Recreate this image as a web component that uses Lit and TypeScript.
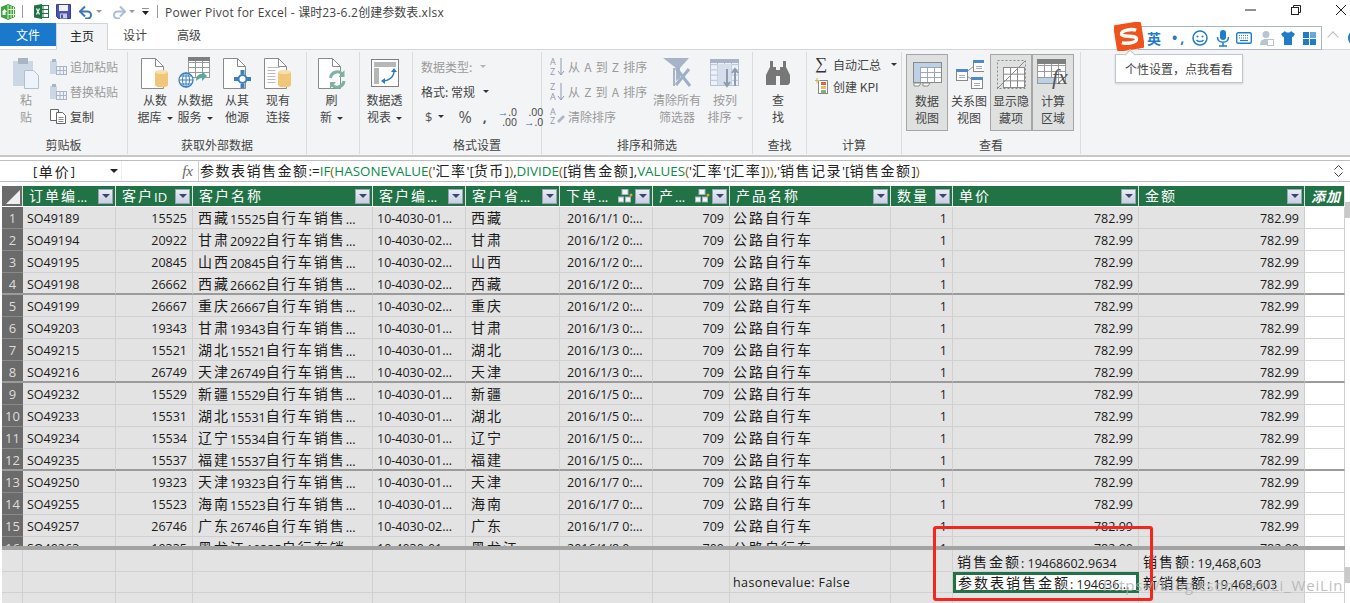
import { LitElement, html, css, svg, unsafeCSS } from "lit";
import { customElement } from "lit/decorators.js";

const cjk = (s: string) =>
  s.split(/([\u3000-\u9fff\uff00-\uffef]+)/).map((p, i) => (i % 2 ? html`<span class="c">${p}</span>` : p));

const COLS = "21px 93px 77px 180px 93px 94px 93px 77px 161px 62px 186px 166px 40px";

const rows: [string, string, string, string, string][] = [
  ["SO49189", "15525", "西藏", "01", "1/1"],
  ["SO49194", "20922", "甘肃", "02", "1/2"],
  ["SO49195", "20845", "山西", "02", "1/2"],
  ["SO49198", "26662", "西藏", "02", "1/2"],
  ["SO49199", "26667", "重庆", "02", "1/2"],
  ["SO49203", "19343", "甘肃", "01", "1/3"],
  ["SO49215", "15521", "湖北", "01", "1/3"],
  ["SO49216", "26749", "天津", "02", "1/3"],
  ["SO49232", "15529", "新疆", "01", "1/5"],
  ["SO49233", "15531", "湖北", "01", "1/5"],
  ["SO49234", "15534", "辽宁", "01", "1/5"],
  ["SO49235", "15537", "福建", "01", "1/5"],
  ["SO49250", "19323", "天津", "01", "1/7"],
  ["SO49255", "15523", "海南", "01", "1/7"],
  ["SO49257", "26746", "广东", "02", "1/7"],
  ["SO49263", "19335", "黑龙江", "01", "1/8"],
];

const heads = ["订单编...", "客户ID", "客户名称", "客户编...", "客户省...", "下单...", "产...", "产品名称", "数量", "单价", "金额"];

const I = (w: number, h: number, body: unknown) =>
  html`<svg width=${w} height=${h} viewBox="0 0 ${w} ${h}" xmlns="http://www.w3.org/2000/svg">${body}</svg>`;

const page = (x = 0.5, y = 0.5, w = 22, h = 30) =>
  svg`<path d="M${x} ${y}h${w - 8}l8 8v${h - 8}h-${w}z" fill="#fff" stroke="#8a8a8a"/><path d="M${x + w - 8} ${y}v8h8" fill="none" stroke="#8a8a8a"/>`;
const cyl = (x: number, y: number, w = 13, h = 17) =>
  svg`<path d="M${x} ${y + 2}v${h - 4}c0 3 ${w} 3 ${w} 0v-${h - 4}z" fill="#efc67a"/><ellipse cx=${x + w / 2} cy=${y + 2} rx=${w / 2} ry="2" fill="#f7dfae"/>`;
const grid = (x: number, y: number, w: number, h: number, c: number, r: number, col = "#9a9a9a", fill = "#fff") => {
  const cw = w / c, rh = h / r;
  const l = [];
  for (let i = 1; i < c; i++) l.push(svg`<path d="M${x + i * cw} ${y}v${h}" stroke=${col} fill="none"/>`);
  for (let i = 1; i < r; i++) l.push(svg`<path d="M${x} ${y + i * rh}h${w}" stroke=${col} fill="none"/>`);
  return svg`<rect x=${x} y=${y} width=${w} height=${h} fill=${fill} stroke=${col}/>${l}`;
};

const ic = {
  app: I(16, 16, svg`<path d="M8 0l7 3v10l-7 3-7-3V3z" fill="#3fa33f"/><path d="M8 1v14M11 2v12M13.500 3v10M8 5.500h7M8 10.500h7" stroke="#dff2cf" fill="none"/><path d="M2 8l2.500-3L7 8H5.500v3h-3V8z" fill="#fff"/>`),
  xl: I(15, 15, svg`<rect x="6" y="1.500" width="8.500" height="12" fill="#fff" stroke="#1f7244"/><path d="M9 2v11M6 5.500h8M6 9.500h8" stroke="#1f7244"/><path d="M0 1.500l8-1.500v15l-8-1.500z" fill="#1f7244"/><path d="M2.500 4.500l3 6M5.500 4.500l-3 6" stroke="#fff" stroke-width="1.200"/>`),
  save: I(15, 15, svg`<path d="M0.500 0.500h14v14h-12l-2-2z" fill="#4f55a8" stroke="#3c3f8c"/><rect x="3" y="1" width="9" height="6" fill="#eef0fa"/><rect x="4" y="9.500" width="7" height="5" fill="#c7cbe3"/><rect x="5" y="10.500" width="2" height="3.500" fill="#4f55a8"/>`),
  undo: I(14, 14, svg`<path d="M2 6.500h6.500a3.500 3.500 0 0 1 0 7H6" fill="none" stroke="#3b78b5" stroke-width="2"/><path d="M6 1.500L1 6.500l5 5" fill="none" stroke="#3b78b5" stroke-width="2"/>`),
  redo: I(14, 14, svg`<path d="M12 6.500H5.500a3.500 3.500 0 0 0 0 7H8" fill="none" stroke="#a9bed4" stroke-width="2"/><path d="M8 1.500l5 5-5 5" fill="none" stroke="#a9bed4" stroke-width="2"/>`),
  paste: I(27, 31, svg`<rect x="0" y="3" width="20" height="25" fill="#ccd7e6"/><rect x="5" y="0" width="10" height="6" fill="#a9b4c2"/><path d="M11.500 12.500h9l5 5v13h-14z" fill="#eef3fb" stroke="#b3bfd0"/>`),
  psm: I(17, 16, svg`<rect x="0" y="2" width="7" height="13" fill="#ccd7e6"/><rect x="2" y="0" width="4" height="3" fill="#a9b4c2"/><rect x="6.500" y="7.500" width="10" height="8" fill="#eef3fb" stroke="#aab4c2"/><path d="M6.500 11.500h10M10 8v7M13.500 8v7" stroke="#aab4c2"/>`),
  copy: I(17, 15, svg`<path d="M0.500 0.500h8v11h-8z" fill="#fff" stroke="#666"/><path d="M6.500 3.500h6l3 3v8h-9z" fill="#fff" stroke="#666"/><path d="M8.500 8.500h5M8.500 10.500h5M8.500 12.500h5" stroke="#888"/>`),
  dbdoc: I(28, 31, svg`${page()}${cyl(14, 12)}`),
  svc: I(34, 32, svg`${grid(10.5, 0.5, 21, 20, 3, 4)}<rect x="10" y="0" width="22" height="4" fill="#7f7f7f"/><circle cx="8" cy="23" r="7" fill="#fff" stroke="#3a7fbf" stroke-width="1.300"/><path d="M1 23h14M8 16v14M3 19h10M3 27h10" stroke="#3a7fbf"/><ellipse cx="8" cy="23" rx="3.500" ry="7" fill="none" stroke="#3a7fbf"/><path d="M18 24c0-5 2-7 6-7v-3l5 5-5 5v-3c-2 0-4 1-6 3z" fill="#5fa79a"/>`),
  other: I(28, 31, svg`${page()}<circle cx="19.500" cy="21" r="4" fill="#fff" stroke="#3a7fbf" stroke-width="2"/><rect x="17.500" y="12" width="4" height="4" fill="#3a7fbf"/><rect x="17.500" y="26" width="4" height="4" fill="#3a7fbf"/><rect x="11" y="19" width="4" height="4" fill="#3a7fbf"/><rect x="24" y="19" width="4" height="4" fill="#3a7fbf"/>`),
  exist: I(28, 31, svg`${page()}<path d="M3.500 9.500h12M3.500 12.500h8M3.500 15.500h8M3.500 18.500h8M3.500 21.500h8M3.500 24.500h8" stroke="#b9b9b9"/>${cyl(14, 12)}`),
  refresh: I(28, 31, svg`${page()}<path d="M12.500 20a7 7 0 0 1 12-4" fill="none" stroke="#7db39f" stroke-width="3"/><path d="M26.500 12v7h-6z" fill="#7db39f"/><path d="M26 23a7 7 0 0 1-12 4" fill="none" stroke="#7db39f" stroke-width="3"/><path d="M12 31v-7h6z" fill="#7db39f"/>`),
  pivot: I(28, 28, svg`<rect x="0.500" y="0.500" width="27" height="27" fill="#fff" stroke="#808080"/><rect x="3" y="3" width="22" height="5" fill="#b7b7b7"/><rect x="3" y="9" width="5" height="16" fill="#b7b7b7"/><path d="M11 22c7 0 12-4 12-10" fill="none" stroke="#2e7cc0" stroke-width="1.500"/><path d="M20 13l3-4 3 4zM14 19l-4 3 4 3z" fill="#2e7cc0"/>`),
  azS: I(15, 19, svg`<text x="0" y="8" class="sv">A</text><text x="0" y="18" class="sv">Z</text><path d="M11 1v16M8 14l3 4 3-4" fill="none" stroke="#8f9aae"/>`),
  zaS: I(15, 19, svg`<text x="0" y="8" class="sv">Z</text><text x="0" y="18" class="sv">A</text><path d="M11 1v16M8 14l3 4 3-4" fill="none" stroke="#8f9aae"/>`),
  clrS: I(15, 17, svg`<text x="0" y="7" class="sv">A</text><text x="0" y="16" class="sv">Z</text><path d="M7 13l6-6 2 2-6 6z" fill="#aeb7c6"/>`),
  funnel: I(31, 30, svg`<path d="M1 0h26l-9 10v10l-4 3V10z" fill="#a8b3c8"/><path d="M14 10l14 18M27 11L14 27" stroke="#9db0c6" stroke-width="3" fill="none"/><path d="M12 10v18" stroke="#a8b3c8" stroke-width="2"/>`),
  colsort: I(31, 29, svg`${grid(0.5, 0.5, 28, 26, 4, 5, "#b6c2d2", "#eef2f8")}<rect x="0" y="0" width="29" height="4" fill="#a8b3c8"/><rect x="7.500" y="5" width="14" height="21" fill="#d6deeb"/><path d="M17 10v17M14 23l3 4 3-4M25 27V10M22 14l3-4 3 4" fill="none" stroke="#8c9bb0" stroke-width="2"/>`),
  bino: I(26, 25, svg`<path d="M3 24h8V6H8V0H5v6L1 14v10zM15 24h8l2-2V14l-4-8V0h-3v6h-3z" fill="#777"/><rect x="11" y="9" width="4" height="6" fill="#777"/>`),
  kpi: I(13, 16, svg`<rect x="3.500" y="2.500" width="9" height="13" fill="#fff" stroke="#888"/><rect x="6" y="4" width="5" height="3" fill="#d9654a"/><rect x="6" y="8" width="5" height="3" fill="#e9bd55"/><rect x="6" y="12" width="5" height="3" fill="#7db387"/><path d="M2 0v5M0 2.500h5" stroke="#e4b23f"/>`),
  dataV: I(29, 25, svg`${grid(0.5, 0.5, 28, 20, 4, 4, "#9aa8b8")}<rect x="0" y="0" width="29" height="5" fill="#bcd0e6"/><rect x="0" y="5" width="7" height="15" fill="#bcd0e6"/><path d="M1 21h7l-2 3H1zM10 21h7l-2 3h-5z" fill="#fff" stroke="#8a8a8a"/><rect x="0.500" y="0.500" width="28" height="20" fill="none" stroke="#8a8a8a"/>`),
  rel: I(29, 31, svg`<path d="M9 15L19 7M9 15l10 7" stroke="#999" fill="none"/>${[[1, 10], [18, 1], [16, 18]].map(([x, y]) => svg`<rect x=${x + 0.5} y=${y + 0.5} width="11" height="11" fill="#fff" stroke="#888"/><rect x=${x} y=${y} width="12" height="3" fill="#4f88c6"/><path d="M${x + 3} ${y + 6.500}h6M${x + 3} ${y + 8.500}h6" stroke="#aaa"/>`)}`),
  hide: I(29, 29, svg`<rect x="0.500" y="0.500" width="28" height="28" fill="none" stroke="#8a8a8a" stroke-dasharray="2 2"/>${grid(6.5, 7.500, 21, 20, 3, 3, "#8a8a8a")}<path d="M0 29L28 1" stroke="#8a8a8a"/>`),
  calc: I(32, 31, svg`${grid(0.5, 0.5, 28, 24, 4, 4, "#9a9a9a")}<rect x="0" y="0" width="29" height="5" fill="#7f7f7f"/><rect x="1" y="19" width="19" height="5" fill="#bcd0e6"/><text x="15" y="25" class="fx">fx</text>`),
  logo: I(30, 29, svg`<g transform="rotate(-9 15 14.500)"><rect x="1" y="1" width="28" height="27" rx="3" fill="#f0521c"/><path d="M23 9.500c-4-2.500-15-2.500-15 1.500 0 4 14 2.500 14 7 0 4-11 3.500-15 1.500" fill="none" stroke="#fff" stroke-width="3.400"/></g>`),
  smile: I(16, 16, svg`<circle cx="8" cy="8" r="7" fill="none" stroke="#1e7cc9" stroke-width="1.500"/><circle cx="5.500" cy="6.500" r="1" fill="#1e7cc9"/><circle cx="10.500" cy="6.500" r="1" fill="#1e7cc9"/><path d="M4.500 10c1.500 2 5.500 2 7 0" fill="none" stroke="#1e7cc9" stroke-width="1.300"/>`),
  mic: I(14, 17, svg`<rect x="4" y="0" width="6" height="10" rx="3" fill="#1e7cc9"/><path d="M1.500 7c0 7 11 7 11 0M7 12v4M3 16h8" fill="none" stroke="#1e7cc9" stroke-width="1.500"/>`),
  kb: I(16, 12, svg`<rect x="0.700" y="0.700" width="14.600" height="10.600" rx="1.500" fill="#fff" stroke="#1e7cc9" stroke-width="1.400"/><path d="M3 3.500h10M3 6h10" stroke="#1e7cc9" stroke-dasharray="1 1"/><path d="M4 8.500h8" stroke="#1e7cc9" stroke-width="1.200"/>`),
  user: I(14, 15, svg`<circle cx="6" cy="3.500" r="3.500" fill="#b9c4d2"/><path d="M0 14c0-4 2-6 6-6s5 1 6 2v4z" fill="#b9c4d2"/><rect x="7.500" y="8.500" width="6" height="6" fill="#fff" stroke="#b9c4d2"/>`),
  shirt: I(14, 14, svg`<path d="M4 0L0 3l2 3 1-.5V14h8V5.500l1 .5 2-3-4-3c-1 2-5 2-6 0z" fill="#1e7cc9"/>`),
  tiles: I(13, 13, svg`<rect width="6" height="6" fill="#1e7cc9"/><rect x="7" width="6" height="6" fill="#6aa8dc"/><rect y="7" width="6" height="6" fill="#1e7cc9"/><rect x="7" y="7" width="6" height="6" fill="#1e7cc9"/>`),
  hier: I(15, 14, svg`<rect x="4" y="0.500" width="6" height="5" fill="#f2f4f8" stroke="#aab2bf"/><rect x="0.500" y="8" width="5" height="5" fill="#f2f4f8" stroke="#aab2bf"/><rect x="7.500" y="8" width="5" height="5" fill="#f2f4f8" stroke="#aab2bf"/><circle cx="13" cy="6" r="1.500" fill="#d9a441"/>`),
  min: I(11, 2, svg`<path d="M0 1h11" stroke="#222"/>`),
  max: I(10, 10, svg`<rect x="0.500" y="2.500" width="7" height="7" fill="#fff" stroke="#222"/><path d="M2.500 2V0.500h7v7H8" fill="none" stroke="#222"/>`),
  close: I(10, 10, svg`<path d="M0 0l10 10M10 0L0 10" stroke="#222"/>`),
  custom: I(7, 7, svg`<path d="M0 0h7" stroke="#222"/><path d="M0 3h7L3.500 7z" fill="#222"/>`),
  up: I(9, 5, svg`<path d="M0.500 4.500l4-4 4 4" fill="none" stroke="#444"/>`),
  down: I(9, 5, svg`<path d="M0.500 0.500l4 4 4-4" fill="none" stroke="#444"/>`),
};

@customElement("app-root")
export class AppRoot extends LitElement {
  static styles = css`
    :host { display: block; width: 1350px; height: 603px; overflow: hidden; position: relative; background: #fff;
      font-family: "Open Sans", "Noto Sans CJK SC", sans-serif; font-size: 12px; color: #333; }
    * { box-sizing: border-box; }
    .sv { font: 9px "Open Sans", sans-serif; fill: #8f9aae; }
    .fx { font: italic 22px "Liberation Serif", serif; fill: #555; }

    .title { height: 23px; display: flex; align-items: center; }
    .qa { display: flex; align-items: center; width: 165px; height: 23px; flex: none; }
    .qa > span { display: flex; flex: none; }
    .m6 { margin-right: 6px; } .m11 { margin-right: 11px; } .m7 { margin-right: 7px; } .m8 { margin-right: 8px; }
    .m3 { margin-right: 3px; } .m10 { margin-right: 10px; }
    .qa .sepbar { width: 1px; height: 13px; background: #9a9a9a; }
    .cap { font-size: 12px; letter-spacing: .25px; color: #444; white-space: nowrap; }
    .cap .c { font-family: "Noto Sans CJK SC", sans-serif; font-size: 12px; letter-spacing: 0; }
    .win { margin-left: auto; margin-right: 4px; margin-bottom: 3px; display: flex; align-items: center; gap: 35px; height: 20px; }
    .win span { display: flex; }
    .qa .tri-s { width: 0; height: 0; border-left: 3px solid transparent; border-right: 3px solid transparent; border-top: 3px solid #999; }
    .tri-k { display: inline-block; width: 0; height: 0; border-left: 3px solid transparent; border-right: 3px solid transparent; border-top: 3px solid #333; vertical-align: middle; margin-left: 5px; }
    .tri-g { border-top-color: #b5b5b5; }

    .tabs { height: 27px; display: flex; border-bottom: 1px solid #d5d5d5; font-family: "Noto Sans CJK SC", sans-serif; color: #444; }
    .tab { height: 23px; line-height: 23px; text-align: center; flex: none; }
    .tab.file { width: 56px; background: #1a79ca; color: #fff; }
    .tab.on { width: 52px; height: 27px; border: 1px solid #d5d5d5; border-bottom: 0; background: #f3f4f6; color: #222; }
    .tab.p { width: 54px; }

    .ribbon { height: 107px; background: #f3f4f6; display: flex; font-family: "Noto Sans CJK SC", sans-serif; color: #444; border-bottom: 2px solid #c8c8c8; }
    .grp { display: flex; flex-direction: column; flex: none; margin: 2px 0 1px; border-right: 1px solid #dcdcdc; }
    .g1 { width: 128px; } .g2 { width: 179px; } .g3 { width: 53px; } .g5 { width: 129px; } .g6 { width: 211px; }
    .g7 { width: 54px; } .g8 { width: 95px; } .g9 { width: 179px; }
    .body { flex: 1; display: flex; min-height: 0; }
    .ctr { justify-content: center; padding-right: 3px; }
    .pl6 { padding-left: 6px; } .pl8 { padding-left: 8px; }
    .lab { height: 17px; line-height: 17px; text-align: center; color: #444; margin-bottom: 1px; }
    .lg { display: flex; flex-direction: column; align-items: center; flex: none; text-align: center; line-height: 17px; }
    .lg .i { height: 39px; display: flex; align-items: center; justify-content: center; flex: none; padding-top: 3px; }
    .w28 { width: 28px; margin-left: 12px; }
    .w36 { width: 36px; } .w38 { width: 38px; } .w40 { width: 40px; } .w42 { width: 42px; } .w44 { width: 44px; } .w46 { width: 46px; } .w50 { width: 50px; } .w52 { width: 52px; }
    .dis { color: #9a9a9a; }
    .smc { display: flex; flex-direction: column; flex: none; margin-top: 2px; }
    .smc.paste { margin-left: 10px; }
    .smc.sort { width: 101px; word-spacing: 1.500px; }
    .smc.calc { margin-top: 1px; }
    .sm { height: 25px; display: flex; align-items: center; gap: 3px; white-space: nowrap; }
    .sm svg { flex: none; }
    .smc.calc .sm { height: 22px; gap: 5px; }
    .sigma { font: 17px "Liberation Serif", serif; width: 13px; color: #333; }
    .num { gap: 0; padding-left: 4px; color: #555; }
    .num .d1 { font: 13px "Open Sans", sans-serif; }
    .num .tri-k { margin: 0 14px 0 6px; }
    .num .pc { font: 16px "Open Sans", sans-serif; margin-right: 11px; }
    .num .cm { font: bold 14px "Open Sans", sans-serif; margin-right: 11px; }
    .num .dec { font: 10.500px/10px "Open Sans", sans-serif; text-align: right; color: #444; margin-right: 7px; }
    .num .dec b { color: #2e6da8; }
    .view { padding: 2px 0 0 4px; gap: 0; }
    .view .lg { width: 42px; height: 77px; border: 1px solid transparent; }
    .view .lg.sel { background: #dfe1e1; border-color: #a6a6a6; }
    .view .lg .i { height: 37px; padding-top: 2px; }

    .fbar { margin-top: 3px; height: 22px; display: flex; background: #fff; border-top: 1px solid #bdbdbd; border-bottom: 1px solid #bdbdbd; align-items: center; }
    .name { width: 122px; padding-left: 33px; display: flex; align-items: center; font-size: 13px; letter-spacing: 1.500px; flex: none; height: 100%; border-right: 1px solid #eee; color: #222; }
    .name .c { font-family: "Noto Sans CJK SC", sans-serif; font-size: 14px; letter-spacing: 2px; }
    .name b { margin-left: auto; margin-right: 3px; width: 0; height: 0; border-left: 4px solid transparent; border-right: 4px solid transparent; border-top: 4px solid #222; }
    .fxb { width: 77px; text-align: right; padding-right: 5px; font: italic 15px "Liberation Serif", serif; color: #666; flex: none; height: 100%; border-right: 1px solid #ccc; line-height: 20px; }
    .ftext { flex: 1; padding: 0 0 2px 1px; font-size: 13.400px; white-space: nowrap; color: #222; overflow: hidden; }
    .ftext .c { font-family: "Noto Sans CJK SC", sans-serif; font-size: 14px; letter-spacing: 1.500px; }
    .ftext i { font-style: normal; color: #0b8a4a; }
    .ftext em { font-style: normal; color: #8a5a00; }
    .updn { width: 18px; flex: none; display: flex; flex-direction: column; align-items: center; gap: 2px; margin-right: 3px; }

    .tablewrap { margin-top: 4px; padding-left: 2px; height: 360px; overflow: hidden; }
    .row { display: grid; grid-template-columns: ${unsafeCSS(COLS)}; }
    .hd { height: 21px; background: #fff; }
    .hd > div { background: #217346; color: #fff; height: 20px; border-right: 1px solid #e0e0e0; display: flex; align-items: center; padding: 0 2px 0 6px; white-space: nowrap; overflow: hidden; font-size: 13px; }
    .hd .ht { margin-bottom: 2px; }
    .hd .c, .d .c, .m .c { font-family: "Noto Sans CJK SC", sans-serif; font-size: 14px; letter-spacing: 2px; vertical-align: 1px; }
    .hd .corner { background: #6b6b6b; padding: 0; align-items: flex-end; justify-content: flex-end; }
    .corner span { width: 0; height: 0; border-left: 14px solid transparent; border-bottom: 14px solid #f0f0f0; margin: 0 2px 2px 0; }
    .fl { margin-left: auto; width: 15px; height: 15px; flex: none; background: linear-gradient(#e8ecf5, #c8cfe0); border: 1px solid #9aa3b5; display: flex; align-items: center; justify-content: center; }
    .fl b { width: 0; height: 0; border-left: 4px solid transparent; border-right: 4px solid transparent; border-top: 4px solid #3c4668; }
    .hier { margin-left: auto; display: flex; margin-right: 2px; }
    .hier + .fl { margin-left: 0; }
    .hd .add { font: italic bold 14px "Noto Sans CJK SC", sans-serif; padding-left: 6px; letter-spacing: 1px; }

    .d { height: 22px; }
    .d > div { background: #e3e3e3; border-right: 1px solid #d0d0d0; border-bottom: 1px solid #d0d0d0; line-height: 23px; padding: 0 5px; white-space: nowrap; overflow: hidden; color: #1a1a1a; font-size: 12.500px; }
    .d > div:nth-child(2), .d > div:nth-child(5) { padding-left: 4px; }
    .d > div:nth-child(4), .d > div:nth-child(6), .d > div:nth-child(9) { line-height: 21px; }
    .d > div:nth-child(7) { padding-left: 7px; }
    .d > div:nth-child(9) { padding-left: 3px; }
    .d > .rh { background: #6b6b6b; color: #ddd; padding: 0; text-align: center; border-right: 0; border-bottom: 1px solid #8a8a8a; font-size: 13px; }
    .d > .r { text-align: right; }
    .d > .blank { background: #fff; }
    .d.sep > div { border-bottom: 2px solid #9b9b9b; }

    .split { height: 4px; background: #a3a3a3; margin-left: 2px; width: 1343px; }
    .meas { padding-left: 2px; }
    .m { height: 21px; }
    .m:first-child { height: 22px; }
    .m > div { background: #e3e3e3; border-right: 1px solid #d0d0d0; border-bottom: 1px solid #d0d0d0; line-height: 21px; padding: 0 4px; white-space: nowrap; overflow: hidden; color: #1a1a1a; font-size: 12.500px; }
    .m:first-child > div { line-height: 22px; }
    .m > .blank { background: #fff; }
    .m > .hv { letter-spacing: .4px; padding-left: 3px; line-height: 22px; }
    .m > .sel { background: #fff; border: 3px solid #217346; line-height: 14px; padding: 0 2px; }

    .scroll { position: absolute; right: 0; width: 5px; background: #c9c9c9; height: 16px; }
    .s1 { top: 202px; } .s2 { top: 567px; }
    .ime { position: absolute; left: 1138px; top: 26px; width: 184px; height: 24px; background: #fff; border: 1px solid #a9b4c4; display: flex; align-items: center; padding-left: 8px; }
    .ime .y { color: #1e7cc9; font: bold 14px "Noto Sans CJK SC", sans-serif; width: 25px; }
    .ime .pu { color: #1e7cc9; font: bold 14px "Open Sans", sans-serif; width: 20px; line-height: 14px; letter-spacing: 3px; }
    .ime svg { flex: none; }
    .ime svg:nth-of-type(1) { margin-right: 8px; }
    .ime svg:nth-of-type(2) { margin-right: 6px; }
    .ime svg:nth-of-type(3) { margin-right: 8px; }
    .ime svg:nth-of-type(4) { margin-right: 7px; }
    .ime svg:nth-of-type(5) { margin-right: 8px; }
    .logo { position: absolute; left: 1114px; top: 22px; display: flex; }
    .chev { position: absolute; left: 1329px; top: 33px; width: 8px; height: 8px; border-left: 1px solid #bbb; border-top: 1px solid #bbb; transform: rotate(45deg); }
    .orb { position: absolute; left: 1348px; top: 32px; width: 8px; height: 12px; border-radius: 50%; background: #1e7cc9; }
    .tip { position: absolute; left: 1115px; top: 54px; width: 128px; height: 29px; background: #fff; border: 1px solid #bfc6cf; font: 12px "Noto Sans CJK SC", sans-serif; color: #444; line-height: 27px; text-align: center; box-shadow: 0 1px 2px rgba(0,0,0,.15); }
    .tip::before { content: ""; position: absolute; left: 10px; top: -4px; width: 7px; height: 7px; background: #fff; border-left: 1px solid #bfc6cf; border-top: 1px solid #bfc6cf; transform: rotate(45deg); }
    .red { position: absolute; left: 933px; top: 526px; width: 220px; height: 75px; border: 3px solid #f5261b; border-radius: 3px; }
    .wm { position: absolute; left: 1103px; top: 575px; font-size: 15px; letter-spacing: .8px; color: rgba(175,175,175,.8); white-space: nowrap; }
  `;

  render() {
    return html`
      <div class="title">
        <div class="qa">
          <span class="m6">${ic.app}</span><span class="sepbar m11"></span>
          <span class="m7">${ic.xl}</span>
          <span class="m8">${ic.save}</span>
          <span class="m3">${ic.undo}</span><span class="tri-s m10"></span>
          <span class="m3">${ic.redo}</span><span class="tri-s m7"></span>
          <span class="m8">${ic.custom}</span>
          <span class="sepbar"></span>
        </div>
        <div class="cap">Power Pivot for Excel - ${cjk("课时")}23-6.2${cjk("创建参数表")}.xlsx</div>
        <div class="win">
          <span>${ic.min}</span>
          <span>${ic.max}</span>
          <span>${ic.close}</span>
        </div>
      </div>

      <div class="tabs">
        <div class="tab file">文件</div>
        <div class="tab on">主页</div>
        <div class="tab p">设计</div>
        <div class="tab p">高级</div>
      </div>

      <div class="ribbon">
        <div class="grp g1">
          <div class="body">
            <div class="lg dis w28"><div class="i">${ic.paste}</div><div>粘<br />贴</div></div>
            <div class="smc paste">
              <div class="sm dis">${ic.psm}追加粘贴</div>
              <div class="sm dis">${ic.psm}替换粘贴</div>
              <div class="sm">${ic.copy}复制</div>
            </div>
          </div>
          <div class="lab">剪贴板</div>
        </div>
        <div class="grp g2">
          <div class="body pl6">
            <div class="lg w42"><div class="i">${ic.dbdoc}</div><div>从数<br />据库<span class="tri-k"></span></div></div>
            <div class="lg w38"><div class="i">${ic.svc}</div><div>从数据<br />服务<span class="tri-k"></span></div></div>
            <div class="lg w46"><div class="i">${ic.other}</div><div>从其<br />他源</div></div>
            <div class="lg w36"><div class="i">${ic.exist}</div><div>现有<br />连接</div></div>
          </div>
          <div class="lab">获取外部数据</div>
        </div>
        <div class="grp g3">
          <div class="body ctr">
            <div class="lg w40"><div class="i">${ic.refresh}</div><div>刷<br />新<span class="tri-k"></span></div></div>
          </div>
          <div class="lab"></div>
        </div>
        <div class="grp g3">
          <div class="body ctr">
            <div class="lg w50"><div class="i">${ic.pivot}</div><div>数据透<br />视表<span class="tri-k"></span></div></div>
          </div>
          <div class="lab"></div>
        </div>
        <div class="grp g5">
          <div class="body pl8">
            <div class="smc">
              <div class="sm dis">数据类型:<span class="tri-k tri-g"></span></div>
              <div class="sm">格式: 常规<span class="tri-k"></span></div>
              <div class="sm num">
                <span class="d1">$</span><span class="tri-k"></span>
                <span class="pc">%</span>
                <span class="cm">,</span>
                <span class="dec"><b>→</b>.0<br />.00</span>
                <span class="dec">.00<br /><b>→</b>.0</span>
              </div>
            </div>
          </div>
          <div class="lab">格式设置</div>
        </div>
        <div class="grp g6">
          <div class="body pl8">
            <div class="smc dis sort">
              <div class="sm">${ic.azS}从 A 到 Z 排序</div>
              <div class="sm">${ic.zaS}从 Z 到 A 排序</div>
              <div class="sm">${ic.clrS}清除排序</div>
            </div>
            <div class="lg dis w52"><div class="i">${ic.funnel}</div><div>清除所有<br />筛选器</div></div>
            <div class="lg dis w44"><div class="i">${ic.colsort}</div><div>按列<br />排序<span class="tri-k tri-g"></span></div></div>
          </div>
          <div class="lab">排序和筛选</div>
        </div>
        <div class="grp g7">
          <div class="body ctr">
            <div class="lg w40"><div class="i">${ic.bino}</div><div>查<br />找</div></div>
          </div>
          <div class="lab">查找</div>
        </div>
        <div class="grp g8">
          <div class="body pl8">
            <div class="smc calc">
              <div class="sm"><span class="sigma">∑</span>自动汇总<span class="tri-k"></span></div>
              <div class="sm">${ic.kpi}创建 KPI</div>
            </div>
          </div>
          <div class="lab">计算</div>
        </div>
        <div class="grp g9">
          <div class="body view">
            <div class="lg sel"><div class="i">${ic.dataV}</div><div>数据<br />视图</div></div>
            <div class="lg"><div class="i">${ic.rel}</div><div>关系图<br />视图</div></div>
            <div class="lg sel"><div class="i">${ic.hide}</div><div>显示隐<br />藏项</div></div>
            <div class="lg sel"><div class="i">${ic.calc}</div><div>计算<br />区域</div></div>
          </div>
          <div class="lab">查看</div>
        </div>
      </div>

      <div class="fbar">
        <div class="name">[${cjk("单价")}]<b></b></div>
        <div class="fxb">fx</div>
        <div class="ftext">${cjk("参数表销售金额")}:=<i>IF</i><em>(</em><i>HASONEVALUE</i><em>(</em>'${cjk("汇率")}'[${cjk("货币")}]<em>)</em>,<i>DIVIDE</i><em>(</em>[${cjk("销售金额")}],<i>VALUES</i><em>(</em>'${cjk("汇率")}'[${cjk("汇率")}]<em>))</em>,'${cjk("销售记录")}'[${cjk("销售金额")}]<em>)</em></div>
        <div class="updn">${ic.up}${ic.down}</div>
      </div>

      <div class="tablewrap">
        <div class="row hd">
          <div class="corner"><span></span></div>
          ${heads.map((h, i) => html`<div><span class="ht">${cjk(h)}</span>${i === 5 || i === 6 ? html`<span class="hier">${ic.hier}</span>` : ""}<span class="fl"><b></b></span></div>`)}
          <div class="add">添加</div>
        </div>
        ${rows.map((r, i) => html`
          <div class="row d ${(i + 1) % 4 === 0 ? "sep" : ""}">
            <div class="rh">${i + 1}</div>
            <div>${r[0]}</div>
            <div class="r">${r[1]}</div>
            <div>${cjk(r[2] + r[1] + (r[2].length > 2 ? "自行车销..." : "自行车销售..."))}</div>
            <div>10-4030-${r[3]}...</div>
            <div>${cjk(r[2])}</div>
            <div>2016/${r[4]} 0:...</div>
            <div class="r">709</div>
            <div>${cjk("公路自行车")}</div>
            <div class="r">1</div>
            <div class="r">782.99</div>
            <div class="r">782.99</div>
            <div class="blank"></div>
          </div>`)}
      </div>
      <div class="split"></div>
      <div class="meas">
        <div class="row m">
          <div></div><div></div><div></div><div></div><div></div><div></div><div></div><div></div><div></div><div></div>
          <div>${cjk("销售金额")}: 19468602.9634</div>
          <div>${cjk("销售额")}: 19,468,603</div>
          <div class="blank"></div>
        </div>
        <div class="row m">
          <div></div><div></div><div></div><div></div><div></div><div></div><div></div><div></div>
          <div class="hv">hasonevalue: False</div><div></div>
          <div class="sel">${cjk("参数表销售金额")}: 194636...</div>
          <div>${cjk("新销售额")}: 19,468,603</div>
          <div class="blank"></div>
        </div>
        <div class="row m">
          <div></div><div></div><div></div><div></div><div></div><div></div><div></div><div></div><div></div><div></div><div></div><div></div><div class="blank"></div>
        </div>
      </div>

      <div class="scroll s1"></div>
      <div class="scroll s2"></div>
      <div class="ime">
        <span class="y">英</span><span class="pu">•,</span>
        ${ic.smile}${ic.mic}${ic.kb}${ic.user}${ic.shirt}${ic.tiles}
      </div>
      <div class="logo">${ic.logo}</div>
      <div class="chev"></div><div class="orb"></div>
      <div class="tip">个性设置，点我看看</div>
      <div class="red"></div>
      <div class="wm">https://blog.csdn.net/Li_WeiLin</div>
    `;
  }
}
